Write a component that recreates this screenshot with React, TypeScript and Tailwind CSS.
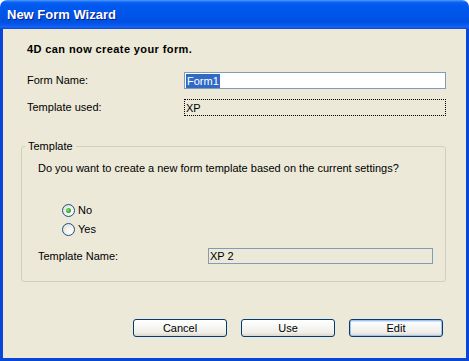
const Radio = ({ checked, label }: { checked?: boolean; label: string }) => (
  <div className="flex items-center h-[13px] ml-[40px]">
    <span className="w-[13px] h-[13px] rounded-full border border-[#1C5180] bg-[radial-gradient(circle_at_65%_70%,#ffffff_0%,#f2f2ef_40%,#d8d8d0_100%)] flex items-center justify-center">
      {checked && (
        <span className="w-[5px] h-[5px] rounded-full bg-[radial-gradient(circle_at_40%_40%,#8fe07c_0%,#2fa62a_60%,#1d8a1b_100%)]" />
      )}
    </span>
    <span className="ml-[3px] leading-[13px]">{label}</span>
  </div>
)

const Button = ({ label, isDefault }: { label: string; isDefault?: boolean }) => (
  <button
    className={
      "w-[94px] h-[18px] rounded-[3px] border border-[#003C74] bg-[linear-gradient(to_bottom,#ffffff_0%,#f7f7f4_40%,#eeede7_80%,#d9d5c9_100%)] text-[11px] leading-[14px] text-black " +
      (isDefault ? "shadow-[inset_0_0_0_1px_#a9c0ec,inset_0_1px_0_1px_#cee7ff]" : "")
    }
  >
    {label}
  </button>
)

export default function App() {
  return (
    <div className="w-[469px] h-[361px] flex flex-col font-['Liberation_Sans',Arial,sans-serif] text-[11px] text-black bg-white">
      {/* title bar */}
      <div className="h-[29px] shrink-0 rounded-t-[7px] flex items-center pl-[7px] bg-[linear-gradient(to_bottom,#4d9bff_0%,#0a61f2_8%,#0058ee_20%,#0055e8_55%,#0050e0_75%,#0a5cf0_88%,#1766f5_93%,#0a45d0_100%)]">
        <span className="text-white font-bold text-[13px] leading-[16px] [text-shadow:1px_1px_0_#0a1e8c]">
          New Form Wizard
        </span>
      </div>

      {/* body */}
      <div className="flex-1 border-x-[3px] border-b-[3px] border-[#0846d8] bg-[#ECE9D8] flex flex-col">
        <div className="mt-[14px] ml-[24px] font-bold leading-[13px] tracking-[0.4px]">
          4D can now create your form.
        </div>

        <div className="mt-[16px] ml-[24px] flex items-center h-[17px]">
          <span className="w-[157px] leading-[13px]">Form Name:</span>
          <div className="w-[262px] h-[17px] bg-white border border-[#7F9DB9] flex items-center pl-[1px]">
            <span className="bg-[#316AC5] text-white leading-[14px] px-[1px]">Form1</span>
          </div>
        </div>

        <div className="mt-[10px] ml-[24px] flex items-center h-[17px]">
          <span className="w-[157px] leading-[13px]">Template used:</span>
          <div className="w-[262px] h-[17px] border border-dotted border-black flex items-center pl-[1px]">
            <span className="leading-[14px]">XP</span>
          </div>
        </div>

        <fieldset className="mt-[24px] ml-[18px] w-[425px] border border-[#D0D0BF] rounded-[3px] pb-[17px]">
          <legend className="ml-[3px] px-[3px] leading-[13px]">Template</legend>
          <div className="mt-[9px] ml-[16px] leading-[13px]">
            Do you want to create a new form template based on the current settings?
          </div>
          <div className="mt-[29px]">
            <Radio checked label="No" />
          </div>
          <div className="mt-[6px]">
            <Radio label="Yes" />
          </div>
          <div className="mt-[12px] ml-[16px] flex items-center h-[16px]">
            <span className="w-[170px] leading-[13px]">Template Name:</span>
            <div className="w-[225px] h-[16px] border border-[#7F9DB9] flex items-center pl-[1px]">
              <span className="leading-[14px]">XP 2</span>
            </div>
          </div>
        </fieldset>

        <div className="mt-[37px] pl-[130px] flex gap-[14px]">
          <Button label="Cancel" />
          <Button label="Use" />
          <Button label="Edit" isDefault />
        </div>
      </div>
    </div>
  )
}
